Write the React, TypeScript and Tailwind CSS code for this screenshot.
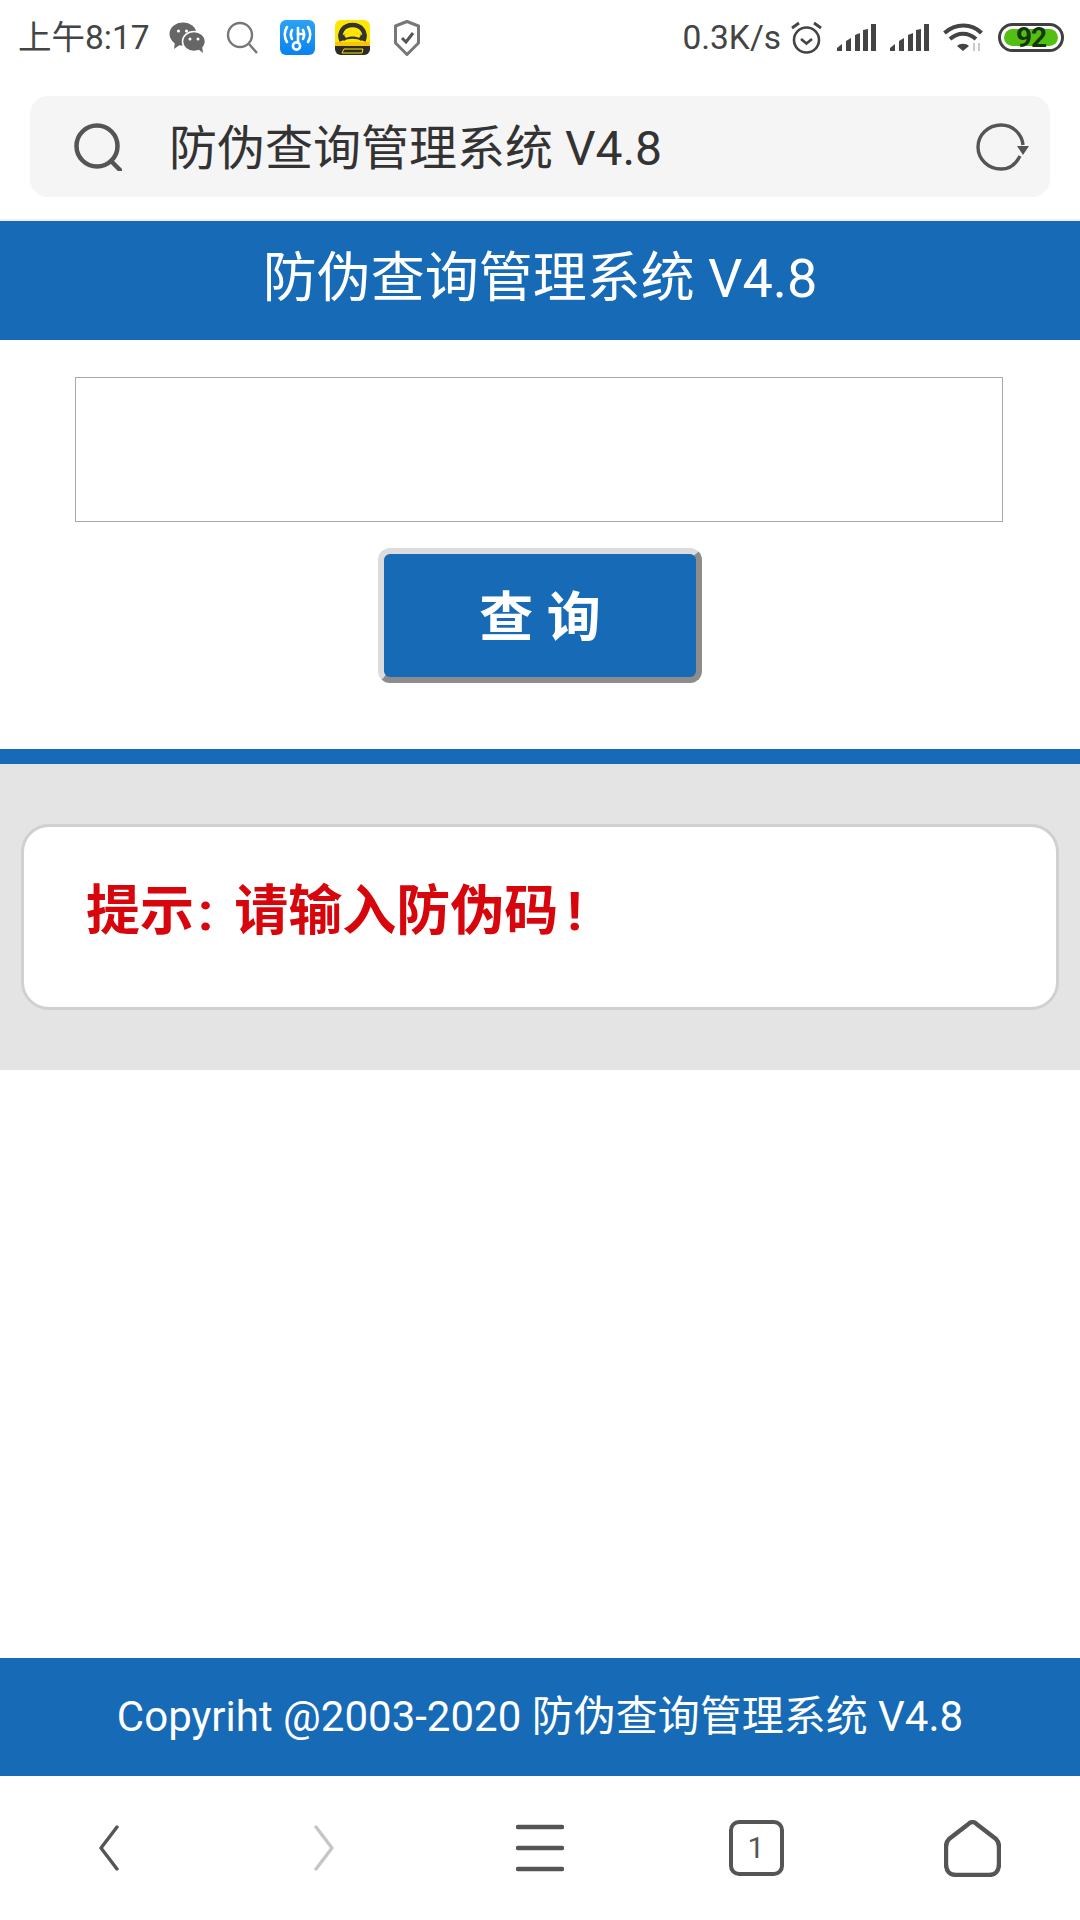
const TITLE = '防伪查询管理系统 V4.8';

function StatusBar() {
  return (
    <div className="flex h-[75px] items-center pl-[18px] pr-[16px] text-[33.500px] leading-none text-[#444444]">
      <span className="w-[131px] shrink-0 whitespace-nowrap">上午8:17</span>
      {/* WeChat */}
      <svg className="ml-[20px] mt-[1px] h-[32px] w-[37px] shrink-0" viewBox="0 0 37 32" fill="#666666">
        <ellipse cx="14" cy="12" rx="13.5" ry="11.5" />
        <path d="M6 20l-1 7 7-5z" />
        <ellipse cx="25" cy="19.5" rx="11.5" ry="10" stroke="#ffffff" strokeWidth="1.5" />
        <path d="M29 27l5 4-1-7z" />
        <circle cx="9.5" cy="9" r="1.6" fill="#ffffff" />
        <circle cx="17.5" cy="9" r="1.6" fill="#ffffff" />
        <circle cx="21" cy="17" r="1.5" fill="#ffffff" />
        <circle cx="29" cy="17" r="1.5" fill="#ffffff" />
      </svg>
      {/* search */}
      <svg className="ml-[20px] h-[33px] w-[32px] shrink-0" viewBox="0 0 32 33" fill="none" stroke="#777777" strokeWidth="2.4">
        <circle cx="14" cy="14" r="12" />
        <path d="M23 23l8 9" />
      </svg>
      {/* wifi key app */}
      <svg className="ml-[22px] h-[35px] w-[35px] shrink-0" viewBox="0 0 35 35">
        <defs>
          <linearGradient id="wifiKey" x1="0" y1="0" x2="0" y2="1">
            <stop offset="0" stopColor="#2ba2f4" />
            <stop offset="1" stopColor="#0a82f0" />
          </linearGradient>
        </defs>
        <rect width="35" height="35" rx="6" fill="url(#wifiKey)" />
        <g fill="none" stroke="#ffffff" strokeWidth="2.6" strokeLinecap="round">
          <path d="M7 7c-3 5-3 10 0 15" />
          <path d="M28 7c3 5 3 10 0 15" />
          <path d="M12 10c-1.500 3-1.500 6 0 9" />
          <path d="M23 10c1.500 3 1.500 6 0 9" />
          <path d="M18 8v14" />
          <path d="M18 14h4" />
          <circle cx="16.500" cy="26" r="3.600" />
        </g>
      </svg>
      {/* yellow driving app */}
      <svg className="ml-[20px] h-[35px] w-[35px] shrink-0" viewBox="0 0 35 35">
        <rect width="35" height="35" rx="6" fill="#ffe600" />
        <path d="M0 26h35v3a6 6 0 0 1-6 6H6a6 6 0 0 1-6-6z" fill="#2b2b2b" />
        <path d="M0 22h35v4H0z" fill="#f7c600" />
        <path d="M6.500 21C3 12 9 5 17.500 5S32 12 28.500 21" fill="none" stroke="#333333" strokeWidth="4.500" />
        <path d="M6 17c2-5 21-5 23 0l-3 4c-3-3-14-3-17 0z" fill="#333333" />
        <path d="M9 15c3-3 14-3 17 0l-2 3c-3-2-10-2-13 0z" fill="#ffe600" />
        <path d="M7 33l2-4h19l-1 4z" fill="none" stroke="#ffe600" strokeWidth="1" />
      </svg>
      {/* shield */}
      <svg className="ml-[24px] h-[36px] w-[26px] shrink-0" viewBox="0 0 26 36" fill="none">
        <path d="M13 1.500L24.500 6v17L13 34.500 1.500 23V6z" stroke="#777777" strokeWidth="3" strokeLinejoin="round" />
        <path d="M8 18l4 4 7-9" stroke="#555555" strokeWidth="3" />
      </svg>
      <span className="ml-auto whitespace-nowrap">0.3K/s</span>
      {/* alarm */}
      <svg className="ml-[9px] h-[33px] w-[33px] shrink-0" viewBox="0 0 33 33" fill="none" stroke="#444444">
        <circle cx="16.500" cy="19" r="12.500" strokeWidth="2.600" />
        <path d="M11 18l5.500 4.500L22 18" strokeWidth="2.600" />
        <path d="M2 7l7-5M31 7l-7-5" strokeWidth="2.800" />
      </svg>
      {/* signal */}
      {[0, 1].map(i => (
        <svg key={i} className="ml-[14px] h-[27px] w-[39px] shrink-0" viewBox="0 0 39 27" fill="#444444">
          <path d="M0 27v-3l5-4v7z" />
          <path d="M9 27V17l5-3v13z" />
          <path d="M18 27V11l5-2v18z" />
          <path d="M26 27V6l5-1v22z" />
          <rect x="34" y="0" width="5" height="27" />
        </svg>
      ))}
      {/* wifi */}
      <svg className="ml-[14px] h-[29px] w-[41px] shrink-0" viewBox="0 0 41 29" fill="none" stroke="#444444" strokeWidth="4">
        <path d="M1.500 10c11-10 27-10 37 0" />
        <path d="M7 16c8-7 18-7 26 0" />
        <path d="M20 28l-6-5c3-3 9-3 12 0z" fill="#444444" strokeWidth="0" />
        <path d="M31 20v8M36 28v-8" stroke="#c9c9c9" strokeWidth="2" />
      </svg>
      {/* battery */}
      <div className="relative ml-[14px] flex h-[29px] w-[66px] shrink-0 items-center rounded-full border-[3px] border-[#404040] p-[3px]">
        <div className="h-full w-full rounded-full bg-[#53bf13]" />
        <span className="absolute inset-0 flex items-center justify-center text-[28px] font-bold leading-none tracking-[-1px] text-[#14380a]">
          92
        </span>
      </div>
    </div>
  );
}

function Toolbar() {
  return (
    <div className="h-[146px] border-b-[2px] border-[#efefef] px-[30px] pt-[21px]">
      <div className="flex h-[101px] items-center rounded-[18px] bg-[#f5f5f5] pl-[44px] pr-[20px]">
        <svg className="h-[48px] w-[48px] shrink-0" viewBox="0 0 48 48" fill="none" stroke="#555555" strokeWidth="4.500">
          <circle cx="23" cy="23" r="20.500" />
          <path d="M37 38l9 9" strokeLinecap="round" />
        </svg>
        <span className="ml-[47px] mt-[5px] whitespace-nowrap text-[48px] leading-none text-[#333333]">{TITLE}</span>
        <svg className="ml-auto h-[48px] w-[54px] shrink-0" viewBox="0 0 54 48" fill="none">
          <path d="M44 33C40 41 33 46 25 46 12 46 2 36 2 24S12 2 25 2c12 0 21 9 22 20" stroke="#555555" strokeWidth="3.400" />
          <path d="M41 23h12l-6 9z" fill="#555555" />
        </svg>
      </div>
    </div>
  );
}

function BottomNav() {
  return (
    <div className="grid h-[144px] grid-cols-5">
      <div className="flex items-center justify-center">
        <svg className="mr-[-1px] h-[46px] w-[21px]" viewBox="0 0 21 46" fill="none" stroke="#555555" strokeWidth="3.400" strokeLinecap="round" strokeLinejoin="round">
          <path d="M19 2L3 23l16 21" />
        </svg>
      </div>
      <div className="flex items-center justify-center">
        <svg className="h-[46px] w-[21px]" viewBox="0 0 21 46" fill="none" stroke="#c6c6c6" strokeWidth="3.400" strokeLinecap="round" strokeLinejoin="round">
          <path d="M2 2l16 21L2 44" />
        </svg>
      </div>
      <div className="flex items-center justify-center">
        <svg className="h-[48px] w-[48px]" viewBox="0 0 48 48" fill="none" stroke="#555555" strokeWidth="4.400" strokeLinecap="round">
          <path d="M2 3h44M2 24h44M2 45h44" />
        </svg>
      </div>
      <div className="flex items-center justify-center">
        <div className="flex h-[56px] w-[55px] items-center justify-center rounded-[10px] border-[4px] border-[#555555] text-[30px] leading-none text-[#555555]">
          1
        </div>
      </div>
      <div className="flex items-center justify-center">
        <svg className="h-[57px] w-[57px]" viewBox="0 0 57 57" fill="none" stroke="#555555" strokeWidth="4.400" strokeLinejoin="round">
          <path d="M24.500 4c2-2.500 6-2.500 8 0L52 19c2 2 3 4 3 8v17c0 7-4 11-10 11H12C6 55 2 51 2 44V27c0-4 1-6 3-8z" />
        </svg>
      </div>
    </div>
  );
}

export default function App() {
  return (
    <div className="flex h-[1920px] w-[1080px] flex-col overflow-hidden bg-white font-['Roboto','Noto_Sans_CJK_SC',sans-serif]">
      <StatusBar />
      <Toolbar />

      {/* Header */}
      <div className="flex h-[119px] items-center justify-center bg-[#176ab6] pb-[3px] text-[54px] leading-none text-white">
        {TITLE}
      </div>

      {/* Query form */}
      <div className="flex flex-col items-center border-b-[15px] border-[#176ab6] pb-[66px] pt-[37px]">
        <input className="mr-[2px] h-[145px] w-[928px] border border-[#aaaaaa] bg-white" />
        <button className="mt-[26px] h-[135px] w-[324px] rounded-[12px] border-[6px] border-b-[#8c8c8c] border-l-[#dcdcdc] border-r-[#8c8c8c] border-t-[#dcdcdc] bg-[#176ab6] pt-[6px] text-[54px] font-bold leading-none text-white">
          查 询
        </button>
      </div>

      {/* Message */}
      <div className="bg-[#e4e4e4] px-[21px] py-[60px]">
        <div className="flex h-[186px] items-center rounded-[28px] border-[3px] border-[#d0d0d0] bg-white pb-[10px] pl-[62px] text-[54px] font-bold leading-none text-[#d7060c]">
          提示<span className="ml-[4px] mr-[21px]">:</span>请输入防伪码<span className="ml-[9px]">!</span>
        </div>
      </div>

      <div className="flex-1" />

      {/* Footer */}
      <div className="flex h-[118px] items-center justify-center bg-[#176ab6] text-[42px] leading-none text-white">
        Copyriht @2003-2020 {TITLE}
      </div>

      <BottomNav />
    </div>
  );
}
